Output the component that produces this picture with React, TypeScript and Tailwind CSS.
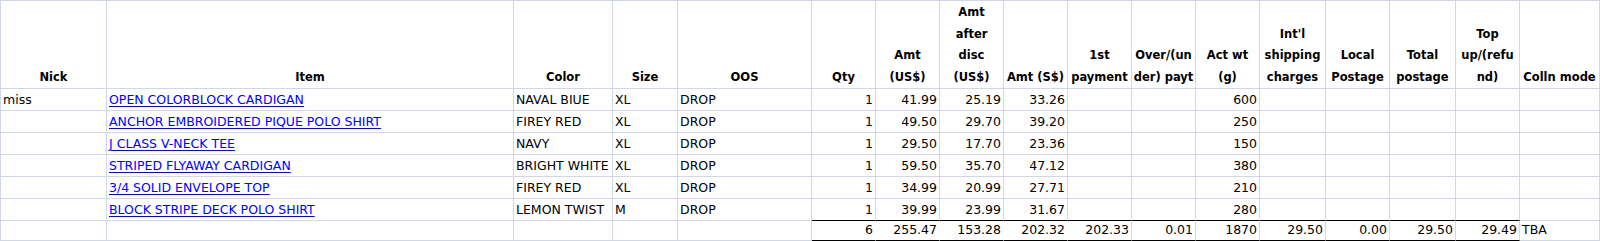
import type { ReactNode } from 'react';

// column widths include the right gridline (first column also holds the left one)
const COL_W = [
  'w-[107px]',
  'w-[407px]',
  'w-[99px]',
  'w-[65px]',
  'w-[134px]',
  'w-[64px]',
  'w-[64px]',
  'w-[64px]',
  'w-[64px]',
  'w-[64px]',
  'w-[64px]',
  'w-[64px]',
  'w-[66px]',
  'w-[64px]',
  'w-[66px]',
  'w-[64px]',
  'w-[80px]',
];

const HEADERS: string[][] = [
  ['Nick'],
  ['Item'],
  ['Color'],
  ['Size'],
  ['OOS'],
  ['Qty'],
  ['Amt', '(US$)'],
  ['Amt', 'after', 'disc', '(US$)'],
  ['Amt (S$)'],
  ['1st', 'payment'],
  ['Over/(un', 'der) payt'],
  ['Act wt', '(g)'],
  ["Int'l", 'shipping', 'charges'],
  ['Local', 'Postage'],
  ['Total', 'postage'],
  ['Top', 'up/(refu', 'nd)'],
  ['Colln mode'],
];

type Order = {
  nick: string;
  item: string;
  color: string;
  size: string;
  oos: string;
  qty: string;
  amtUs: string;
  afterDisc: string;
  amtSg: string;
  weight: string;
};

const ORDERS: Order[] = [
  { nick: 'miss', item: 'OPEN COLORBLOCK CARDIGAN', color: 'NAVAL BIUE', size: 'XL', oos: 'DROP', qty: '1', amtUs: '41.99', afterDisc: '25.19', amtSg: '33.26', weight: '600' },
  { nick: '', item: 'ANCHOR EMBROIDERED PIQUE POLO SHIRT', color: 'FIREY RED', size: 'XL', oos: 'DROP', qty: '1', amtUs: '49.50', afterDisc: '29.70', amtSg: '39.20', weight: '250' },
  { nick: '', item: 'J CLASS V-NECK TEE', color: 'NAVY', size: 'XL', oos: 'DROP', qty: '1', amtUs: '29.50', afterDisc: '17.70', amtSg: '23.36', weight: '150' },
  { nick: '', item: 'STRIPED FLYAWAY CARDIGAN', color: 'BRIGHT WHITE', size: 'XL', oos: 'DROP', qty: '1', amtUs: '59.50', afterDisc: '35.70', amtSg: '47.12', weight: '380' },
  { nick: '', item: '3/4 SOLID ENVELOPE TOP', color: 'FIREY RED', size: 'XL', oos: 'DROP', qty: '1', amtUs: '34.99', afterDisc: '20.99', amtSg: '27.71', weight: '210' },
  { nick: '', item: 'BLOCK STRIPE DECK POLO SHIRT', color: 'LEMON TWIST', size: 'M', oos: 'DROP', qty: '1', amtUs: '39.99', afterDisc: '23.99', amtSg: '31.67', weight: '280' },
];

const TOTALS = ['', '', '', '', '', '6', '255.47', '153.28', '202.32', '202.33', '0.01', '1870', '29.50', '0.00', '29.50', '29.49', 'TBA'];

// columns that hold figures are right aligned
const NUMERIC = new Set([5, 6, 7, 8, 9, 10, 11, 12, 13, 14, 15]);

function Cell({
  col,
  children,
  right,
  blackBottom,
  noRight,
}: {
  col: number;
  children?: ReactNode;
  right?: boolean;
  blackBottom?: boolean;
  noRight?: boolean;
}) {
  return (
    <div
      className={[
        COL_W[col],
        'shrink-0 flex items-end overflow-hidden whitespace-nowrap border-b border-r leading-[20px] px-[2px]',
        col === 0 ? 'border-l border-l-[#d0d7e5]' : '',
        blackBottom ? 'border-b-black' : 'border-b-[#d0d7e5]',
        noRight ? 'border-r-white' : 'border-r-[#d0d7e5]',
        right ? 'justify-end' : 'justify-start',
      ].join(' ')}
    >
      {children}
    </div>
  );
}

function HeaderRow() {
  return (
    <div className="flex h-[89px] border-t border-[#d0d7e5]">
      {HEADERS.map((lines, i) => (
        <div
          key={i}
          className={[
            COL_W[i],
            'shrink-0 flex flex-col items-center justify-end overflow-hidden whitespace-nowrap border-b border-r border-[#d0d7e5] text-[11.5px] font-bold leading-[21.5px] text-center',
            i === 0 ? 'border-l' : '',
          ].join(' ')}
        >
          {lines.map((l) => (
            <span key={l}>{l}</span>
          ))}
        </div>
      ))}
    </div>
  );
}

function OrderRow({ order, last }: { order: Order; last: boolean }) {
  const values = [
    order.nick,
    order.item,
    order.color,
    order.size,
    order.oos,
    order.qty,
    order.amtUs,
    order.afterDisc,
    order.amtSg,
    '',
    '',
    order.weight,
    '',
    '',
    '',
    '',
    '',
  ];
  return (
    <div className="flex h-[22px]">
      {values.map((v, i) => (
        <Cell key={i} col={i} right={NUMERIC.has(i)} blackBottom={last && i >= 5 && i <= 15}>
          {i === 1 ? (
            <a href="#" className="text-[#0000ff] underline underline-offset-[2px]">
              {v}
            </a>
          ) : (
            v
          )}
        </Cell>
      ))}
    </div>
  );
}

function TotalRow() {
  return (
    <div className="flex h-[20px]">
      {TOTALS.map((v, i) => (
        <Cell key={i} col={i} right={NUMERIC.has(i)} blackBottom={i >= 5 && i <= 15} noRight={i >= 5 && i <= 8}>
          {v}
        </Cell>
      ))}
    </div>
  );
}

export default function App() {
  return (
    <div className="w-[1600px] h-[241px] bg-white text-black text-[12.5px] overflow-hidden font-['DejaVu_Sans',sans-serif]">
      <HeaderRow />
      {ORDERS.map((o, i) => (
        <OrderRow key={i} order={o} last={i === ORDERS.length - 1} />
      ))}
      <TotalRow />
    </div>
  );
}
